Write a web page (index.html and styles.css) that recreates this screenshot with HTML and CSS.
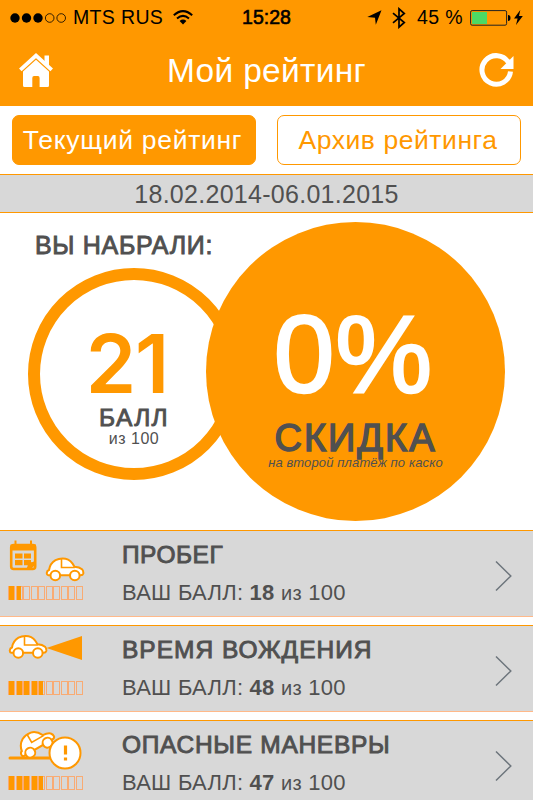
FILE: index.html
```html
<!DOCTYPE html>
<html lang="ru">
<head>
    <meta charset="UTF-8">
    <meta name="viewport" content="width=device-width, initial-scale=1.0">
    <title>Мой рейтинг</title>
    <link rel="stylesheet" href="styles.css">
</head>
<body>
    <!-- car shared by the list icons -->
    <svg class="defs">
        <symbol id="car" viewBox="0 0 40 25">
            <path d="M4.5 18.2H3.2Q1.6 18 1.8 15.8Q2 13.6 4 13Q5 6.5 10.5 3.2Q15 .9 20.5 1.8Q26 2.9 29.5 9.8Q34.5 10 37 12.2Q38.6 14 38.3 16.4Q37.8 18.2 35.5 18.2Z" fill="#fff" stroke="#ff9800" stroke-width="2"/>
            <path d="M16.5 1.6V10.5H29.8" fill="none" stroke="#ff9800" stroke-width="1.6"/>
            <circle cx="10.3" cy="18.5" r="4.8" fill="#fff" stroke="#ff9800" stroke-width="2"/>
            <circle cx="29.8" cy="18.5" r="4.8" fill="#fff" stroke="#ff9800" stroke-width="2"/>
        </symbol>
    </svg>

    <header>
        <div class="status">
            <div class="carrier">
                <svg width="57" height="12" viewBox="0 0 57 12">
                    <circle cx="5" cy="6" r="4.7"/>
                    <circle cx="16.5" cy="6" r="4.7"/>
                    <circle cx="28" cy="6" r="4.7"/>
                    <circle cx="39.7" cy="6" r="4.3" fill="none" stroke="#000" stroke-width=".8"/>
                    <circle cx="51.2" cy="6" r="4.3" fill="none" stroke="#000" stroke-width=".8"/>
                </svg>
                <span class="operator">MTS RUS</span>
                <svg width="20" height="15" viewBox="0 0 20 15" fill="none" stroke="#000" stroke-width="2">
                    <path d="M.8 5.2Q10-3 19.2 5.2"/>
                    <path d="M4 8.5Q10 3.3 16 8.5"/>
                    <path d="M6.6 10.9Q10 8.3 13.4 10.9L10 14.6Z" fill="#000" stroke="none"/>
                </svg>
            </div>
            <span class="clock">15:28</span>
            <div class="power">
                <svg width="15" height="15" viewBox="0 0 15 15"><path d="M14.5 .3L8.8 14.8L8 7.7L.3 7.1Z"/></svg>
                <svg width="14" height="22" viewBox="0 0 14 22" fill="none" stroke="#000" stroke-width="1.7"><path d="M1 6.2L12.3 15.5L7 20.2V1.8L12.3 6.5L1 15.8"/></svg>
                <span class="percent">45 %</span>
                <svg class="battery" width="42" height="16" viewBox="0 0 42 16">
                    <rect x=".6" y=".6" width="36" height="14.6" rx="1.5" fill="none" stroke="#222" stroke-width="1"/>
                    <rect x="2" y="2" width="15" height="12" fill="#4cd964"/>
                    <path d="M38 5Q40.5 5 40.5 8T38 11Z"/>
                </svg>
                <svg width="9" height="15" viewBox="0 0 9 15"><path d="M6.3 0L0 8.6H3.6L2 15L8.8 5.9H5Z"/></svg>
            </div>
        </div>
        <div class="navbar">
            <svg class="home" width="36" height="36" viewBox="0 0 36 36" fill="#fff">
                <path d="M2.3 17.8L18 3.5L33.7 17.8" fill="none" stroke="#fff" stroke-width="3.8"/>
                <path d="M26.5 3.5H31V14L26.5 10Z"/>
                <path d="M18 7.8L31 19.6V33.5Q31 35 29.5 35H21.6V26Q21.6 24 20 24H16Q14.3 24 14.3 26V35H6.5Q5 35 5 33.5V19.6Z"/>
            </svg>
            <h1>Мой рейтинг</h1>
            <svg class="refresh" width="36" height="36" viewBox="0 0 36 36">
                <path d="M31.5 19.5A14.3 14.3 0 1 1 29.5 10.5" fill="none" stroke="#fff" stroke-width="5"/>
                <path d="M34.5 4V17H21.5Z" fill="#fff"/>
            </svg>
        </div>
    </header>

    <div class="tabs">
        <button class="tab active">Текущий рейтинг</button>
        <button class="tab archive">Архив рейтинга</button>
    </div>

    <div class="period">18.02.2014-06.01.2015</div>

    <section class="summary">
        <h2>ВЫ НАБРАЛИ:</h2>
        <div class="circles">
            <div class="score">
                <div class="score-value">21</div>
                <div class="score-label">БАЛЛ</div>
                <div class="score-total">из 100</div>
            </div>
            <div class="discount">
                <div class="discount-value">0%</div>
                <div class="discount-label">СКИДКА</div>
                <div class="discount-note">на второй платёж по каско</div>
            </div>
        </div>
    </section>

    <div class="list">
        <div class="row">
            <div class="icon">
                <svg width="78" height="46" viewBox="0 0 78 46">
                    <rect x="3.2" y="5" width="24" height="24" rx="2.5" fill="none" stroke="#ff9800" stroke-width="2.6"/>
                    <path d="M2.5 4.5H28V10.5H2.5Z" fill="#ff9800"/>
                    <path d="M7.5 .5V9M23 .5V9" stroke="#ff9800" stroke-width="2"/>
                    <path d="M7 13.5H14.5V18.5H7ZM16 13.5H23V18.5H16ZM7 20H14.5V25.2H7ZM16 20H23V25.2H16Z" fill="#ff9800"/>
                    <path d="M17 30Q20.500 27 19.5 22.5Q25 23 28 20V24L22 30Z" fill="#ff9800"/>
                    <use href="#car" x="37" y="17" width="40" height="25"/>
                </svg>
                <div class="meter" data-value="18"></div>
            </div>
            <div class="info">
                <h3 class="mileage">ПРОБЕГ</h3>
                <p>ВАШ БАЛЛ: <b>18</b> <small>из</small> 100</p>
            </div>
            <svg class="arrow" width="18" height="32" viewBox="0 0 18 32"><path d="M1 1.5L15.8 16L1 30.5"/></svg>
        </div>
        <div class="row">
            <div class="icon">
                <svg width="78" height="46" viewBox="0 0 78 46">
                    <path d="M38.5 13L74 1V25Z" fill="#ff9800"/>
                    <use href="#car" x="0" y="-.5" width="40" height="25"/>
                </svg>
                <div class="meter" data-value="48"></div>
            </div>
            <div class="info">
                <h3 class="time">ВРЕМЯ ВОЖДЕНИЯ</h3>
                <p>ВАШ БАЛЛ: <b>48</b> <small>из</small> 100</p>
            </div>
            <svg class="arrow" width="18" height="32" viewBox="0 0 18 32"><path d="M1 1.5L15.8 16L1 30.5"/></svg>
        </div>
        <div class="row">
            <div class="icon">
                <svg width="78" height="46" viewBox="0 0 78 46">
                    <path d="M2 28H44" stroke="#ff9800" stroke-width="3" stroke-linecap="round"/>
                    <use href="#car" x="8" y="0" width="41" height="26" transform="rotate(-30 27 14)"/>
                    <circle cx="57" cy="23" r="15.5" fill="#fff" stroke="#ff9800" stroke-width="2"/>
                    <path d="M57.5 15.5V24.5M57.5 27.5V30.5" stroke="#ff9800" stroke-width="3.2"/>
                </svg>
                <div class="meter" data-value="47"></div>
            </div>
            <div class="info">
                <h3 class="maneuvers">ОПАСНЫЕ МАНЕВРЫ</h3>
                <p>ВАШ БАЛЛ: <b>47</b> <small>из</small> 100</p>
            </div>
            <svg class="arrow" width="18" height="32" viewBox="0 0 18 32"><path d="M1 1.5L15.8 16L1 30.5"/></svg>
        </div>
    </div>

    <script>
        // ten cells per meter, each one is worth 10 points
        document.querySelectorAll(".meter").forEach(function (meter) {
            const value = Number(meter.dataset.value);
            for (let i = 0; i < 10; i++) {
                const cell = document.createElement("span");
                const fill = document.createElement("i");
                const part = Math.max(0, Math.min(10, value - i * 10));
                fill.style.width = part * 10 + "%";
                cell.appendChild(fill);
                meter.appendChild(cell);
            }
        });
    </script>
</body>
</html>
```
FILE: styles.css
```css
* {
    box-sizing: border-box;
}

body {
    margin: 0;
    height: 800px;
    overflow: hidden;
    background: #fff;
    color: #505050;
    font-family: "Liberation Sans", Arial, sans-serif;
}

h1, h2, h3, p {
    margin: 0;
    font-weight: normal;
}

svg {
    display: block;
    flex: none;
}

.defs {
    display: none;
}

header {
    height: 106px;
    background: #ff9800;
    color: #fff;
}

.status {
    display: grid;
    grid-template-columns: 1fr auto 1fr;
    align-items: center;
    height: 35px;
    padding: 0 10px 0 10px;
    color: #000;
    font-size: 19.5px;
    white-space: nowrap;
}

.carrier, .power {
    display: flex;
    align-items: center;
}

.operator {
    margin: 0 10px 0 6px;
    letter-spacing: 0.35px;
}

.clock {
    -webkit-text-stroke: 0.6px #000;
}

.power {
    justify-content: flex-end;
}

.power svg:nth-child(2) {
    margin: 0 11px 0 10px;
}

.percent {
    margin-right: 7px;
    letter-spacing: 0.4px;
}

.battery {
    margin-right: 2px;
}

.navbar {
    display: flex;
    justify-content: space-between;
    align-items: center;
    height: 70px;
    padding: 0 18px;
}

h1 {
    padding-top: 2px;
    font-size: 33.5px;
    letter-spacing: 0.3px;
}

.tabs {
    display: flex;
    justify-content: space-between;
    height: 68px;
    padding: 9px 12px;
}

.tab {
    width: 244px;
    height: 50px;
    padding: 0 2px 0 0;
    border: 1.5px solid #ff9800;
    border-radius: 7px;
    background: #fff;
    color: #ff9800;
    font-family: inherit;
    font-size: 26.5px;
    letter-spacing: 0.55px;
    white-space: nowrap;
}

.tab.active {
    padding-right: 3px;
    background: #ff9800;
    color: #fff;
    letter-spacing: 0.7px;
}

.period {
    height: 39px;
    border-top: 1px solid #ff9800;
    border-bottom: 1px solid #ff9800;
    background: #d8d8d8;
    font-size: 25px;
    line-height: 38px;
    letter-spacing: 0.28px;
    text-align: center;
}

.summary {
    height: 317px;
}

h2 {
    height: 9px;
    padding: 18px 0 0 35px;
    font-size: 25px;
    line-height: 28px;
    letter-spacing: 0.7px;
    -webkit-text-stroke: 0.9px #505050;
}

.circles {
    display: flex;
    padding-left: 28px;
    margin-top: -9px;
    text-align: center;
    white-space: nowrap;
}

.score {
    width: 212px;
    height: 212px;
    margin-top: 46px;
    padding-top: 45px;
    border: 12px solid #ff9800;
    border-radius: 50%;
}

.score-value {
    height: 82px;
    margin-left: -14px;
    color: #ff9800;
    font-family: Inter, "Liberation Sans", sans-serif;
    font-size: 81px;
    font-weight: 600;
    line-height: 78px;
    letter-spacing: -1px;
}

.score-label {
    height: 23px;
    font-size: 24.5px;
    line-height: 22px;
    letter-spacing: 1.3px;
    -webkit-text-stroke: 0.9px #505050;
}

.score-total {
    font-size: 16px;
    line-height: 17px;
    letter-spacing: 0.5px;
}

.discount {
    width: 299px;
    height: 299px;
    margin-left: -34px;
    padding-top: 73px;
    border-radius: 50%;
    background: #ff9800;
}

.discount-value {
    height: 122px;
    margin-left: -4px;
    color: #fff;
    font-size: 109px;
    line-height: 119px;
    letter-spacing: 1px;
    -webkit-text-stroke: 2.5px #fff;
}

.discount-label {
    height: 38px;
    font-size: 38px;
    line-height: 43px;
    letter-spacing: 2px;
    -webkit-text-stroke: 1.5px #505050;
}

.discount-note {
    font-size: 13px;
    font-style: italic;
    line-height: 16px;
    letter-spacing: 0.13px;
}

.list {
    display: flex;
    flex-direction: column;
    gap: 8px;
}

.row {
    display: flex;
    flex: none;
    height: 87px;
    padding-right: 20px;
    border-top: 1px solid #ff9800;
    border-bottom: 1px solid #ffb98a;
    background: #d8d8d8;
}

.icon {
    width: 122px;
    padding: 9px 0 0 8px;
}

.meter {
    display: flex;
    width: 75px;
    height: 14px;
    gap: 0.5px;
}

.meter span {
    flex: 1;
    border: 1px solid #f9ab73;
}

.meter i {
    display: block;
    height: 14px;
    margin: -1px 0;
    background: #ff9800;
}

.info {
    flex: 1;
}

h3 {
    margin-top: 9px;
    font-size: 24.5px;
    line-height: 30px;
    -webkit-text-stroke: 0.9px #505050;
}

.mileage {
    letter-spacing: 0.5px;
}

.time {
    letter-spacing: 1px;
}

.maneuvers {
    letter-spacing: 0.7px;
}

.info p {
    margin-top: 9px;
    font-size: 22px;
    line-height: 28px;
    letter-spacing: 0.25px;
}

.info small {
    font-size: 20px;
}

.arrow {
    margin-top: 29px;
    fill: none;
    stroke: #6d757c;
    stroke-width: 1.5;
}
```
